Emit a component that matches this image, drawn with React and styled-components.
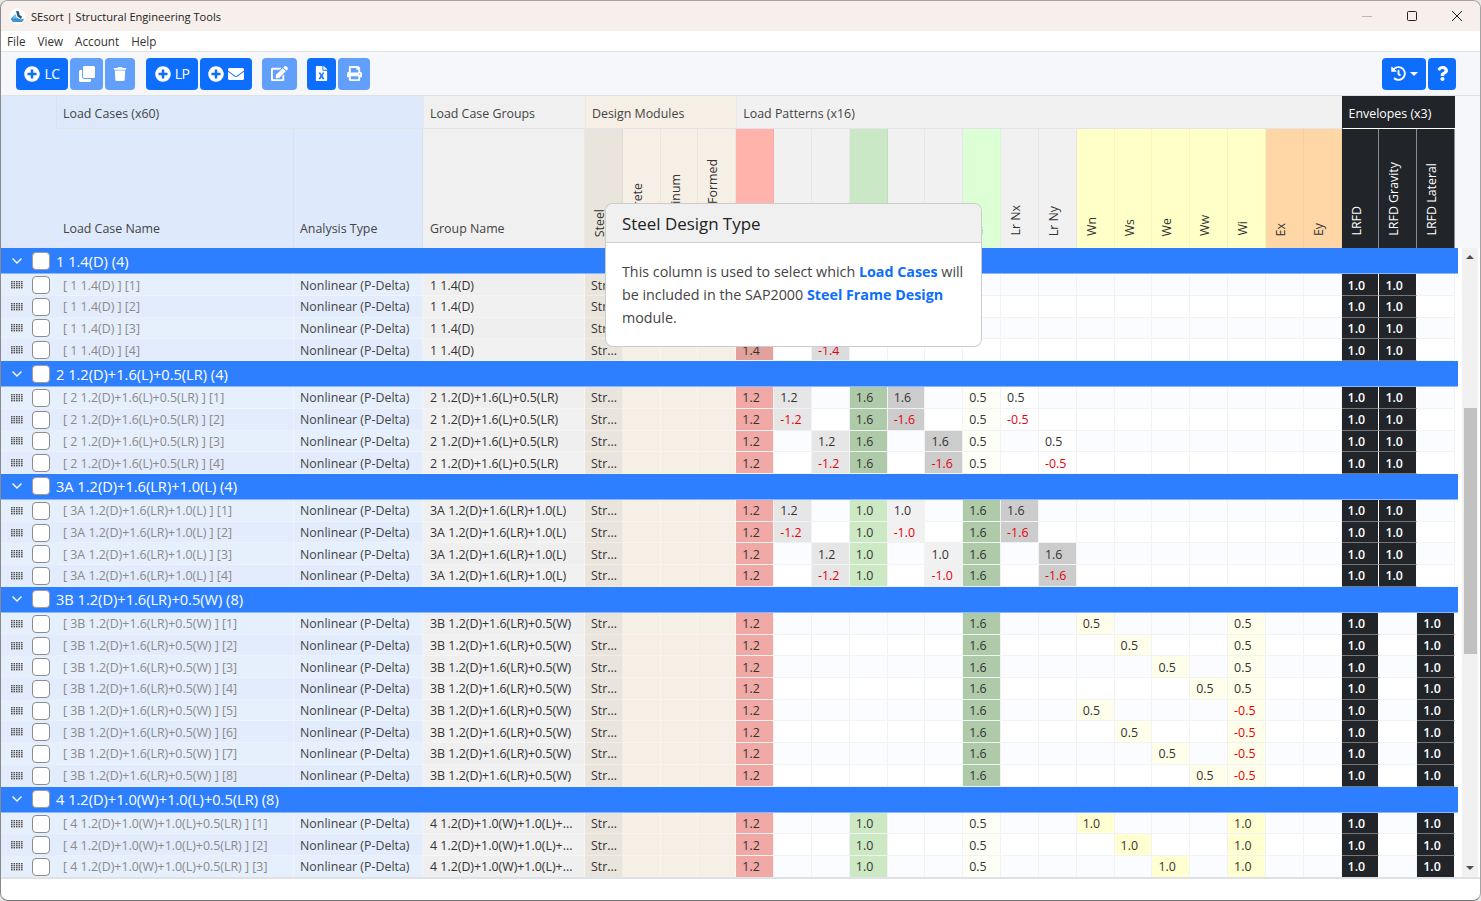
import React from 'react';
import styled, { createGlobalStyle } from 'styled-components';
import {
  FaPlusCircle, FaClone, FaTrash, FaEnvelope, FaEdit, FaFileExcel, FaPrint, FaHistory, FaQuestion,
} from 'react-icons/fa';

const COLS = '55px 238px 129px 162px repeat(23, 37.83px)';
const FONT = '"Open Sans", "Noto Sans", sans-serif';

const Global = createGlobalStyle`
  html, body { margin: 0; padding: 0; background: #e8e8e8; }
  * { box-sizing: border-box; }
  body { font-family: ${FONT}; font-size: 12.4px; color: #333; overflow: hidden; }
`;

const Window = styled.div`
  position: relative;
  width: 1481px;
  height: 901px;
  display: flex;
  flex-direction: column;
  background: #fff;
  border: 1px solid #a3a3a3;
  border-bottom-color: #757575;
  border-left-color: #8a8a8a;
  border-radius: 8px;
  overflow: hidden;
`;

const TitleBar = styled.div`
  height: 30px;
  flex: none;
  display: flex;
  align-items: center;
  padding: 0 18px 0 8px;
  background: #f6efeb;
  color: #222;
  font-size: 11.1px;
`;
const TitleText = styled.span`
  margin-left: 5px;
  flex: 1;
`;
const WinButtons = styled.div`
  display: flex;
  align-items: center;
  gap: 35px;
`;

const MenuBar = styled.div`
  height: 21px;
  flex: none;
  display: flex;
  align-items: center;
  gap: 12px;
  padding: 0 0 1px 6px;
  font-size: 11.7px;
  color: #333;
  border-bottom: 1px solid #e0e3e8;
`;

const Toolbar = styled.div`
  height: 44px;
  flex: none;
  display: flex;
  align-items: center;
  padding: 0 24px 0 15px;
  background: #f6f7fa;
  border-bottom: 1px solid #dee2e6;
`;
const BtnGroup = styled.div`
  display: flex;
  gap: 2px;
  margin-right: ${p => (p.$mr === undefined ? 10 : p.$mr)}px;
`;
const ToolButton = styled.button`
  width: ${p => p.$w}px;
  height: 32px;
  border: 0;
  border-radius: 4px;
  padding: 0;
  display: flex;
  align-items: center;
  justify-content: center;
  gap: 4px;
  color: #fff;
  background: ${p => (p.$muted ? '#629ffb' : '#0d6efd')};
  font-family: ${FONT};
  font-size: 14px;
  letter-spacing: -0.5px;
  svg { display: block; }
`;
const Spacer = styled.div`
  flex: 1;
`;
const Caret = styled.span`
  width: 0;
  height: 0;
  border-left: 4px solid transparent;
  border-right: 4px solid transparent;
  border-top: 4px solid #fff;
`;

const HeaderGrid = styled.div`
  display: grid;
  flex: none;
  grid-template-columns: ${COLS};
  grid-template-rows: 33px 119px;
  background: #f6f7fa;
  height: 152px;
`;
const Corner = styled.div`
  grid-row: span 2;
  background: #dde9fb;
`;
const GroupHead = styled.div`
  grid-column: span ${p => p.$span};
  background: ${p => p.$bg};
  color: ${p => p.$fg || '#444'};
  display: flex;
  align-items: center;
  padding: 2px 0 0 6px;
  border-bottom: 1px solid ${p => (p.$fg ? '#fff' : '#e2e4e8')};
  border-left: 1px solid rgba(0, 0, 0, 0.03);
  font-size: 12.4px;
`;
const ColHead = styled.div`
  background: ${p => p.$bg};
  color: #444;
  display: flex;
  align-items: flex-end;
  padding: 0 0 11px ${p => p.$pad}px;
  border-right: 1px solid rgba(0, 0, 0, 0.03);
`;
const VertHead = styled.div`
  background: ${p => p.$bg};
  color: ${p => (p.$dark ? '#fff' : '#333')};
  display: flex;
  align-items: flex-end;
  padding: 0 0 ${p => p.$pb || 12}px 6px;
  overflow: hidden;
  border-right: 1px solid ${p => (p.$dark ? '#8a8d90' : 'rgba(0, 0, 0, 0.04)')};
`;
const VertLabel = styled.span`
  writing-mode: vertical-rl;
  transform: rotate(180deg);
  white-space: nowrap;
  line-height: 17px;
`;

const BodyWrap = styled.div`
  display: flex;
  height: 629px;
  flex: none;
  border-bottom: 2px solid #dee2e6;
  box-sizing: content-box;
`;
const Body = styled.div`
  width: 1457px;
  flex: none;
  overflow: hidden;
`;
const GroupBar = styled.div`
  height: 26.2px;
  display: flex;
  align-items: center;
  background: #2d7fff;
  color: #fff;
  font-size: 14.6px;
  border-bottom: 1px solid #8ab7ff;
`;
const Chevron = styled.span`
  width: 31px;
  display: flex;
  justify-content: center;
  svg { display: block; }
`;
const Check = styled.span`
  width: 18px;
  height: 18px;
  flex: none;
  background: #fff;
  border: 1px solid ${p => (p.$onBlue ? '#a99a90' : '#8c8c8c')};
  border-radius: 4px;
`;
const GroupLabel = styled.span`
  margin-left: 6px;
`;
const Row = styled.div`
  display: grid;
  grid-template-columns: ${COLS};
  height: 21.7px;
`;
const HandleCell = styled.div`
  display: flex;
  align-items: center;
  background: ${p => (p.$odd ? '#e6effc' : '#e2ecfc')};
  svg { margin: 0 9px 0 10px; }
`;
const NameCell = styled.div`
  display: flex;
  align-items: center;
  padding: 1px 0 0 ${p => p.$pad}px;
  white-space: nowrap;
  overflow: hidden;
  color: ${p => p.$fg};
  background: ${p => p.$bg};
  border-right: 1px solid rgba(255, 255, 255, 0.4);
  border-bottom: 1px solid rgba(255, 255, 255, 0.35);
`;
const ValueCell = styled.div`
  display: flex;
  align-items: center;
  padding: 1px 0 0 6px;
  color: ${p => (p.$neg ? '#e6000e' : '#333')};
  background: ${p => p.$bg};
  border-right: 1px solid #f1f2f4;
  border-bottom: 1px solid #f1f2f4;
`;
const EnvCell = styled.div`
  display: flex;
  align-items: center;
  padding: 1px 0 0 6px;
  color: #fff;
  font-weight: 600;
  background: ${p => (p.$on ? '#212529' : p.$bg)};
  border-right: 1px solid ${p => (p.$on ? '#fff' : '#f1f2f4')};
  border-bottom: 1px solid ${p => (p.$on ? '#777' : '#f1f2f4')};
`;

const ScrollBar = styled.div`
  width: 16px;
  margin-left: 4px;
  flex: none;
  background: #f1f1f1;
  display: flex;
  flex-direction: column;
  align-items: center;
  justify-content: space-between;
  padding: 7px 0 7px;
`;
const Arrow = styled.span`
  width: 0;
  height: 0;
  border-left: 4px solid transparent;
  border-right: 4px solid transparent;
  ${p => (p.$up ? 'border-bottom: 4px solid #505050;' : 'border-top: 4px solid #505050;')}
`;
const Thumb = styled.div`
  width: 13px;
  height: 246px;
  margin-top: -64px;
  background: #c1c1c1;
`;

const Popover = styled.div`
  position: absolute;
  left: 604px;
  top: 202px;
  width: 377px;
  height: 144px;
  background: #fff;
  border: 1px solid rgba(0, 0, 0, 0.2);
  border-radius: 8px;
  overflow: hidden;
  z-index: 5;
`;
const PopTitle = styled.div`
  height: 39px;
  display: flex;
  align-items: center;
  padding-left: 16px;
  background: #f0f0f0;
  border-bottom: 1px solid #d0d0d0;
  color: #222;
  font-size: 16.9px;
  font-weight: 500;
`;
const PopBody = styled.div`
  padding: 18px 16px;
  color: #444;
  font-size: 14.3px;
  line-height: 22.8px;
  b { color: #0d6efd; font-weight: 700; }
`;

const Logo = () => (
  <svg width="17" height="17" viewBox="0 0 17 17">
    <circle cx="8.5" cy="8.5" r="8.3" fill="#fff" />
    <path d="M1.5 11 L5 7.5 L8 10 L12 11.5 L15.5 10.5 L13 14 L4 14 Z" fill="#3d93cf" />
    <path d="M7 3 L10 3.5 L10.5 7 L13 8.5 L12 11 L8.5 8.5 Z" fill="#27557f" />
    <path d="M3.5 9 L6.5 6 L7.5 9 L5 11 Z" fill="#75c3ea" />
  </svg>
);

const Handle = () => (
  <svg width="12" height="8" viewBox="0 0 12 8" fill="#555">
    {[0, 2, 4, 6].flatMap(y =>
      [0, 2.5, 5, 7.5, 10].map(x => <rect key={`${x}-${y}`} x={x} y={y} width="1.6" height="1.4" />),
    )}
  </svg>
);

const HEAD = {
  D: '#ffb3ab', G: '#f1f1f1', L: '#cbe8c6', R: '#ddffd6', W: '#ffffc8', E: '#ffd6a5',
};
const PATTERNS = [
  ['D', 'D'], ['D Nx', 'G'], ['D Ny', 'G'], ['L', 'L'], ['L Nx', 'G'], ['L Ny', 'G'], ['Lr', 'R'], ['Lr Nx', 'G'],
  ['Lr Ny', 'G'], ['Wn', 'W'], ['Ws', 'W'], ['We', 'W'], ['Ww', 'W'], ['Wi', 'W'], ['Ex', 'E'], ['Ey', 'E'],
];
const MODULES = [['Steel', 11], ['Concrete', 13], ['Aluminum', 14], ['Cold-Formed', 14]];
const ENVS = ['LRFD', 'LRFD Gravity', 'LRFD Lateral'];

const cellColor = (col, abs, odd) => {
  const blank = odd ? '#fbfcff' : '#ffffff';
  if (abs === undefined) return blank;
  if (col === 0) return abs > 1.3 ? '#e3a19c' : '#f0a9a5';
  if (col === 1 || col === 2) return abs > 1.3 ? '#dcdcdc' : '#e6e6e6';
  if (col === 3 || col === 6) {
    if (abs > 1.3) return '#aecaa8';
    if (abs > 0.7) return '#cde9c4';
    return '#fdfff6';
  }
  if (col === 4 || col === 5 || col === 7 || col === 8) {
    if (abs > 1.3) return '#cccccc';
    if (abs > 0.7) return '#f1f1f1';
    return '#ffffff';
  }
  if (col >= 9 && col <= 13) return abs > 0.7 ? '#ffffd1' : '#fffeeb';
  return blank;
};

const nxny = (base, c1, c2, v1, v2, c3, v3) => [
  { ...base, [c1]: v1, [c2]: v2, ...(c3 ? { [c3]: v3 } : {}) },
  { ...base, [c1]: -v1, [c2]: -v2, ...(c3 ? { [c3]: -v3 } : {}) },
];

const GROUPS = [
  {
    name: '1 1.4(D)', count: 4, lc: '[ 1 1.4(D) ]', gn: '1 1.4(D)', env: [1, 1, 0],
    rows: [{ 0: 1.4, 1: 1.4 }, { 0: 1.4, 1: -1.4 }, { 0: 1.4, 2: 1.4 }, { 0: 1.4, 2: -1.4 }],
  },
  {
    name: '2 1.2(D)+1.6(L)+0.5(LR)', count: 4, lc: '[ 2 1.2(D)+1.6(L)+0.5(LR) ]', gn: '2 1.2(D)+1.6(L)+0.5(LR)', env: [1, 1, 0],
    rows: [
      ...nxny({ 0: 1.2, 3: 1.6, 6: 0.5 }, 1, 4, 1.2, 1.6, 7, 0.5),
      ...nxny({ 0: 1.2, 3: 1.6, 6: 0.5 }, 2, 5, 1.2, 1.6, 8, 0.5),
    ],
  },
  {
    name: '3A 1.2(D)+1.6(LR)+1.0(L)', count: 4, lc: '[ 3A 1.2(D)+1.6(LR)+1.0(L) ]', gn: '3A 1.2(D)+1.6(LR)+1.0(L)', env: [1, 1, 0],
    rows: [
      ...nxny({ 0: 1.2, 3: 1.0, 6: 1.6 }, 1, 4, 1.2, 1.0, 7, 1.6),
      ...nxny({ 0: 1.2, 3: 1.0, 6: 1.6 }, 2, 5, 1.2, 1.0, 8, 1.6),
    ],
  },
  {
    name: '3B 1.2(D)+1.6(LR)+0.5(W)', count: 8, lc: '[ 3B 1.2(D)+1.6(LR)+0.5(W) ]', gn: '3B 1.2(D)+1.6(LR)+0.5(W)', env: [1, 0, 1],
    rows: [9, 10, 11, 12, 9, 10, 11, 12].map((c, i) => ({ 0: 1.2, 6: 1.6, [c]: 0.5, 13: i < 4 ? 0.5 : -0.5 })),
  },
  {
    name: '4 1.2(D)+1.0(W)+1.0(L)+0.5(LR)', count: 8, lc: '[ 4 1.2(D)+1.0(W)+1.0(L)+0.5(LR) ]', gn: '4 1.2(D)+1.0(W)+1.0(L)+...', env: [1, 0, 1],
    rows: [9, 10, 11].map(c => ({ 0: 1.2, 3: 1.0, 6: 0.5, [c]: 1.0, 13: 1.0 })),
  },
];

const DataRow = ({ group, data, index }) => {
  const odd = index % 2 === 0;
  return (
    <Row>
      <HandleCell $odd={odd}>
        <Handle />
        <Check />
      </HandleCell>
      <NameCell $pad={7} $fg="#8a8a8a" $bg={odd ? '#e6effc' : '#e2ecfc'}>{`${group.lc} [${index + 1}]`}</NameCell>
      <NameCell $pad={6} $fg="#444" $bg={odd ? '#e6effc' : '#e2ecfc'}>Nonlinear (P-Delta)</NameCell>
      <NameCell $pad={7} $fg="#333" $bg={odd ? '#efefef' : '#f1f1f1'}>{group.gn}</NameCell>
      <NameCell $pad={6} $fg="#333" $bg="#e9e4dc">Str...</NameCell>
      {[0, 1, 2].map(i => (
        <NameCell key={i} $pad={6} $fg="#333" $bg="#f6efe6" />
      ))}
      {PATTERNS.map((_, c) => {
        const v = data[c];
        return (
          <ValueCell key={c} $neg={v < 0} $bg={cellColor(c, v === undefined ? undefined : Math.abs(v), odd)}>
            {v === undefined ? '' : v.toFixed(1)}
          </ValueCell>
        );
      })}
      {group.env.map((on, i) => (
        <EnvCell key={i} $on={!!on} $bg={odd ? '#fbfcff' : '#ffffff'}>
          {on ? '1.0' : ''}
        </EnvCell>
      ))}
    </Row>
  );
};

export default function App() {
  return (
    <>
      <Global />
      <Window>
        <TitleBar>
          <Logo />
          <TitleText>SEsort | Structural Engineering Tools</TitleText>
          <WinButtons>
            <svg width="10" height="10" viewBox="0 0 10 10">
              <path d="M0 5.5H10" stroke="#b9b9b9" strokeWidth="1" />
            </svg>
            <svg width="10" height="10" viewBox="0 0 10 10">
              <rect x="0.5" y="0.5" width="9" height="9" rx="1" fill="none" stroke="#222" />
            </svg>
            <svg width="10" height="10" viewBox="0 0 10 10">
              <path d="M0 0L10 10M10 0L0 10" stroke="#222" />
            </svg>
          </WinButtons>
        </TitleBar>
        <MenuBar>
          <span>File</span>
          <span>View</span>
          <span>Account</span>
          <span>Help</span>
        </MenuBar>
        <Toolbar>
          <BtnGroup $mr={11}>
            <ToolButton $w={52}><FaPlusCircle size={16} />LC</ToolButton>
            <ToolButton $w={33} $muted><FaClone size={16} /></ToolButton>
            <ToolButton $w={30} $muted><FaTrash size={14} /></ToolButton>
          </BtnGroup>
          <BtnGroup>
            <ToolButton $w={52}><FaPlusCircle size={16} />LP</ToolButton>
            <ToolButton $w={52}><FaPlusCircle size={16} /><FaEnvelope size={16} /></ToolButton>
          </BtnGroup>
          <BtnGroup>
            <ToolButton $w={35} $muted><FaEdit size={17} /></ToolButton>
          </BtnGroup>
          <BtnGroup>
            <ToolButton $w={29}><FaFileExcel size={15} /></ToolButton>
            <ToolButton $w={32} $muted><FaPrint size={15} /></ToolButton>
          </BtnGroup>
          <Spacer />
          <BtnGroup $mr={0}>
            <ToolButton $w={44}><FaHistory size={15} /><Caret /></ToolButton>
            <ToolButton $w={28}><FaQuestion size={15} /></ToolButton>
          </BtnGroup>
        </Toolbar>

        <HeaderGrid>
          <Corner />
          <GroupHead $span={2} $bg="#dde9fb">Load Cases (x60)</GroupHead>
          <GroupHead $span={1} $bg="#f0f0f0">Load Case Groups</GroupHead>
          <GroupHead $span={4} $bg="#f6efe6">Design Modules</GroupHead>
          <GroupHead $span={16} $bg="#f1f1f1">Load Patterns (x16)</GroupHead>
          <GroupHead $span={3} $bg="#212529" $fg="#fff">Envelopes (x3)</GroupHead>
          <ColHead $pad={7} $bg="#dee9fb">Load Case Name</ColHead>
          <ColHead $pad={6} $bg="#dee9fb">Analysis Type</ColHead>
          <ColHead $pad={7} $bg="#f0f0f0">Group Name</ColHead>
          {MODULES.map(([m, pb], i) => (
            <VertHead key={m} $pb={pb} $bg={i === 0 ? '#e9e4dc' : '#f6efe6'}><VertLabel>{m}</VertLabel></VertHead>
          ))}
          {PATTERNS.map(([n, k]) => (
            <VertHead key={n} $bg={HEAD[k]}><VertLabel>{n}</VertLabel></VertHead>
          ))}
          {ENVS.map(e => (
            <VertHead key={e} $bg="#212529" $dark><VertLabel>{e}</VertLabel></VertHead>
          ))}
        </HeaderGrid>

        <BodyWrap>
          <Body>
            {GROUPS.map(g => (
              <React.Fragment key={g.name}>
                <GroupBar>
                  <Chevron>
                    <svg width="10" height="6" viewBox="0 0 10 6">
                      <path d="M0.5 0.5L5 5L9.5 0.5" fill="none" stroke="#fff" strokeWidth="1.4" />
                    </svg>
                  </Chevron>
                  <Check $onBlue />
                  <GroupLabel>{`${g.name} (${g.count})`}</GroupLabel>
                </GroupBar>
                {g.rows.map((r, i) => (
                  <DataRow key={i} group={g} data={r} index={i} />
                ))}
              </React.Fragment>
            ))}
          </Body>
          <ScrollBar>
            <Arrow $up />
            <Thumb />
            <Arrow />
          </ScrollBar>
        </BodyWrap>

        <Popover>
          <PopTitle>Steel Design Type</PopTitle>
          <PopBody>
            This column is used to select which <b>Load Cases</b> will be included in the SAP2000{' '}
            <b>Steel Frame Design</b> module.
          </PopBody>
        </Popover>
      </Window>
    </>
  );
}
